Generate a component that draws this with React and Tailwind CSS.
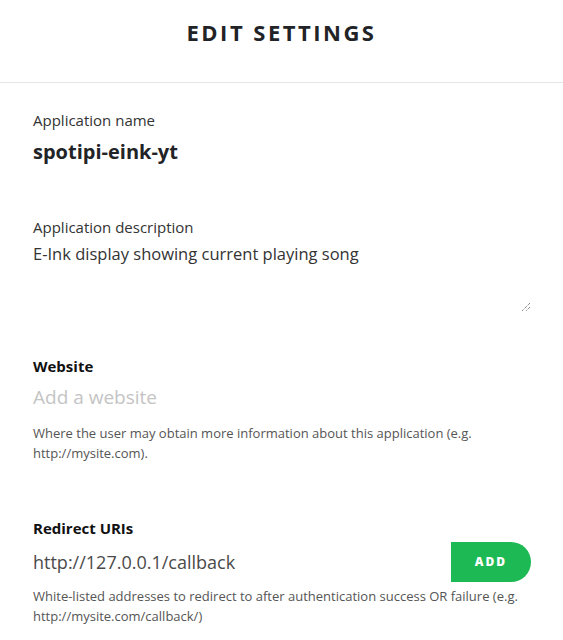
export default function App() {
  const font = { fontFamily: '"Open Sans", "Noto Sans", sans-serif' };
  return (
    <div className="w-[563px] h-[640px] bg-white overflow-hidden text-[#181818]" style={font}>
      <div className="h-[83px] border-b border-[#e5e5e5] flex justify-center pt-[17px]">
        <h1 className="text-[22px] leading-[30px] font-bold tracking-[2.5px] text-[#222326]">EDIT SETTINGS</h1>
      </div>
      <div className="px-[33px] pr-[32px] pt-[27px] flex flex-col">
        <div className="text-[15px] leading-[20px] text-[#333]">Application name</div>
        <div className="mt-[10px] text-[20px] leading-[24px] font-bold text-[#222326]">spotipi-eink-yt</div>

        <div className="mt-[53px] text-[15px] leading-[20px] text-[#333]">Application description</div>
        <div className="relative mt-[6px] h-[69px]">
          <div className="text-[16.5px] leading-[22px] text-[#333]">E-Ink display showing current playing song</div>
          <svg className="absolute right-[0px] bottom-[0px]" width="10" height="10" viewBox="0 0 10 10">
            <path d="M9 1 L1 9 M9 5 L5 9" stroke="#555" strokeWidth="1" strokeDasharray="1 1" />
          </svg>
        </div>

        <div className="mt-[44px] text-[15px] leading-[20px] font-bold text-[#111]">Website</div>
        <div className="mt-[9px] text-[19px] leading-[24px] text-[#c4c4c4]">Add a website</div>
        <div className="mt-[14px] text-[13px] leading-[20px] text-[#555]">
          Where the user may obtain more information about this application (e.g.<br />http://mysite.com).
        </div>

        <div className="mt-[55px] text-[15px] leading-[20px] font-bold text-[#111]">Redirect URIs</div>
        <div className="mt-[4px] flex items-center justify-between h-[40px]">
          <div className="text-[18px] leading-[24px] text-[#4a4a4a]">http://127.0.0.1/callback</div>
          <button className="w-[80px] h-[40px] bg-[#1db954] rounded-r-full text-white text-[12px] font-extrabold tracking-[2px]">ADD</button>
        </div>
        <div className="mt-[4px] text-[13px] leading-[20px] text-[#555]">
          White-listed addresses to redirect to after authentication success OR failure (e.g.<br />http://mysite.com/callback/)
        </div>
      </div>
    </div>
  );
}
